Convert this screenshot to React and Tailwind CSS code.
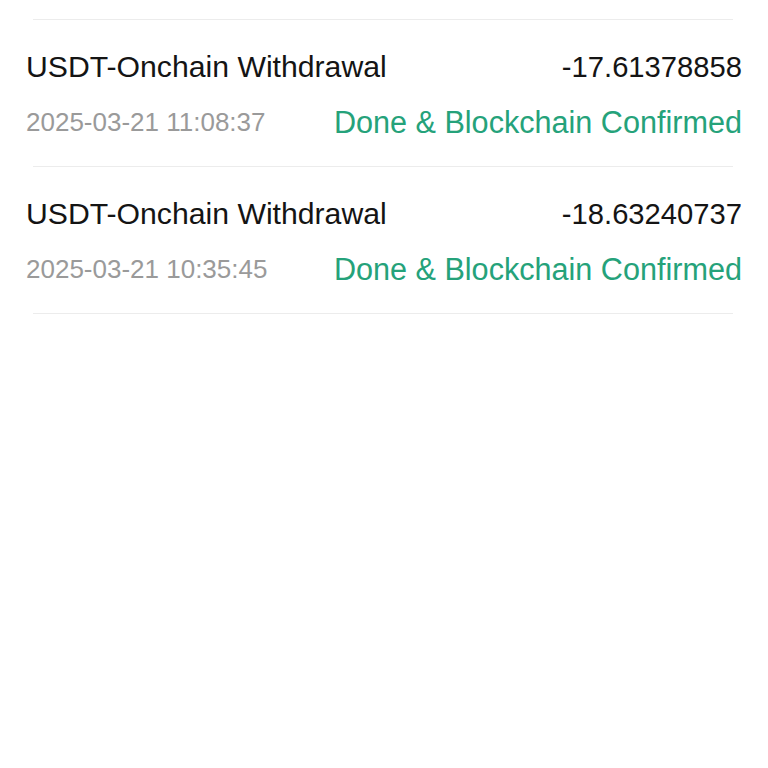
const rows = [
  { title: "USDT-Onchain Withdrawal", amount: "-17.61378858", time: "2025-03-21 11:08:37", status: "Done & Blockchain Confirmed" },
  { title: "USDT-Onchain Withdrawal", amount: "-18.63240737", time: "2025-03-21 10:35:45", status: "Done & Blockchain Confirmed" },
];

export default function App() {
  return (
    <main className="min-h-screen w-full bg-white pt-[19px] font-['Liberation_Sans',Arial,sans-serif]">
      <div className="ml-[33px] mr-[35px] h-px bg-[#ececec]"></div>
      {rows.map((row, i) => (
        <div key={i}>
          <div className="px-[26px] pt-[29px] pb-[26px]">
            <div className="flex items-center justify-between h-9 text-[30.2px] leading-9 text-[#141414]">
              <span>{row.title}</span>
              <span className="text-[29.2px]">{row.amount}</span>
            </div>
            <div className="mt-[19px] flex items-center justify-between h-9 leading-9">
              <span className="text-[26px] text-[#9a9a9a]">{row.time}</span>
              <span className="text-[30.6px] text-[#25a27a]">{row.status}</span>
            </div>
          </div>
          <div className="ml-[33px] mr-[35px] h-px bg-[#ececec]"></div>
        </div>
      ))}
    </main>
  );
}
